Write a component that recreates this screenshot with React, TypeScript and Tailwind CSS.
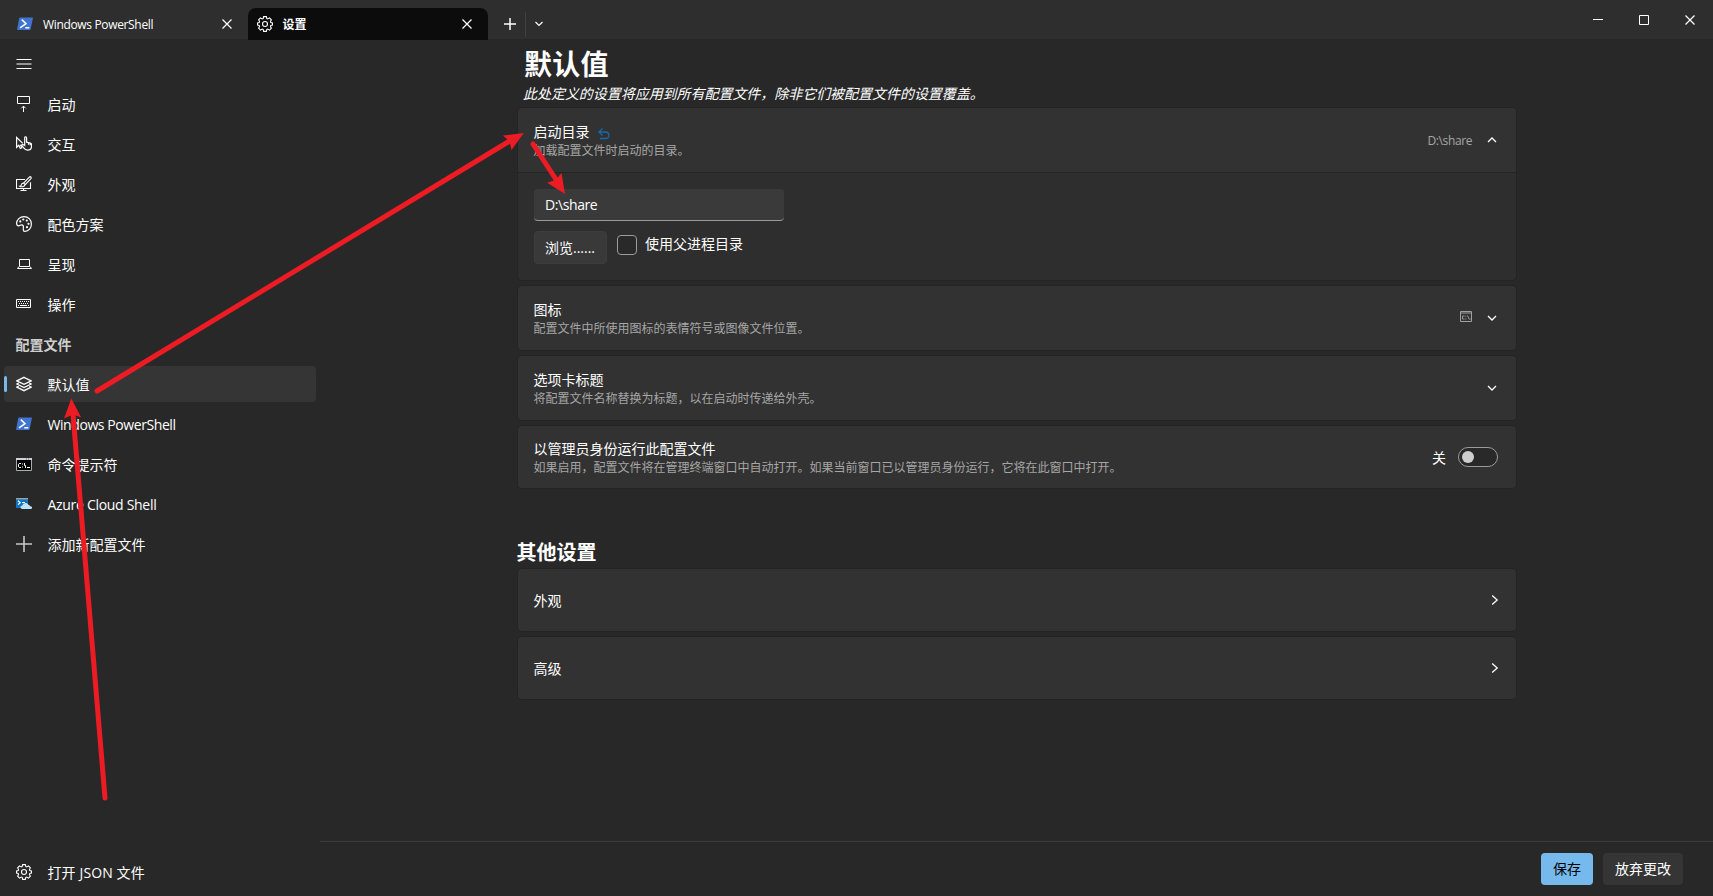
import React from "react";

const S = ({ children, w = 16, h = 16, className = "", sw = 1 }: any) => (
  <svg width={w} height={h} viewBox={`0 0 ${w} ${h}`} fill="none" stroke="currentColor" strokeWidth={sw} className={"shrink-0 " + className}>
    {children}
  </svg>
);

const Gear = () => (
  <S sw={1.1}>
    <path d="M6.6 0.6h2.8l.4 1.9 1 .4 1.700-1 1.900 1.900-1 1.700.4 1 1.700.4v2.200l-1.700.4-.4 1 1 1.700-1.900 1.900-1.700-1-1 .4-.4 1.900H6.600l-.4-1.900-1-.4-1.700 1-1.900-1.900 1-1.700-.4-1-1.700-.4V6.900l1.700-.4.4-1-1-1.700L3.500 1.900l1.700 1 1-.4z" />
    <circle cx="8" cy="8" r="2.500" />
  </S>
);

const PowerShell = () => (
  <S>
    <path d="M3 1.500h12.300c.5 0 .7.3.6.8l-2.300 10.900c-.1.500-.5.800-1 .8H.700c-.5 0-.7-.3-.6-.8L2.200 2.300c.1-.5.400-.8.800-.8z" fill="#3f74d1" stroke="none" />
    <path d="M4.800 3.600l4.200 4-6 4.200M8.300 11.800h4" stroke="#fff" strokeWidth="1.500" />
  </S>
);

const Launch = () => (
  <S>
    <path d="M1.500.5h12v7h-12zM7.500 16V10.200M5.300 12.300l2.200-2.200 2.200 2.200" />
  </S>
);

const Interact = () => (
  <S sw={1.2}>
    <path d="M6.800 7.400L.6 1.500v9.800l2.200-2.100 1.500 3.300 1.500-.7-1.400-3" />
    <path d="M8.700 9.400V1.700c0-1.300 1.900-1.300 1.900 0v4.500l3.700.8c.8.2 1.200.7 1.200 1.500v1.700c0 2.300-1.600 3.900-3.900 3.900-1.800 0-3-.9-3.900-2.200L5.400 9.200c.8-.9 1.900-.9 3.300.200zM12.500 6.800v2M14.200 7.200v2" />
  </S>
);

const Appearance = () => (
  <S sw={1.1}>
    <path d="M9 3.500H.5v9h14V6.200M7.500 12.500v2M4.500 14.500h6" />
    <path d="M14.900 1c-.6-.6-1.300-.2-1.800.3L7.600 7l1.600 1.600 5.500-5.800c.5-.5.700-1.200.2-1.800zM7.500 7.100c-1.500 0-2 .8-2.200 1.900-.1.700-.6 1.100-1.600 1.200 1 .7 4.800 1.200 5.400-1.500" />
  </S>
);

const Palette = () => (
  <S sw={1.2}>
    <path d="M8 .6C4 .6.600 3.700.600 7.300c0 1.500.9 2.500 2.100 2.500 1.300 0 1.800-.9 3-.9 1.400 0 1.900 1 1.700 2.300-.2 1.800-.5 4.200 1.600 4.200 3.700 0 6.400-3.400 6.400-7.400C15.400 3.700 12.100.6 8 .6z" />
    <g fill="currentColor" stroke="none">
      <circle cx="4.300" cy="5.400" r="1.100" /><circle cx="7.300" cy="3.500" r="1.100" /><circle cx="10.800" cy="4.600" r="1.100" />
      <circle cx="12.500" cy="7.800" r="1.100" /><circle cx="11" cy="11.200" r="1.100" />
    </g>
  </S>
);

const Laptop = () => (
  <S>
    <path d="M3.500 3.500h10v7h-10zM3 10.500l-1.500 2h14l-1.500-2" />
  </S>
);

const Keyboard = () => (
  <S>
    <path d="M.5 3.500h14v8H.5z" />
    <path d="M2 5.500h11M3 7.500h10" strokeDasharray="1 1" />
    <path d="M2 9.500h1M4 9.500h7M12 9.500h1" />
  </S>
);

const Layers = () => (
  <S sw={1.300}>
    <path d="M8 1.300l7.200 3.500L8 8.300.8 4.800zM2.700 7.100L.8 8 8 11.500 15.200 8l-1.900-.9M2.700 10.300l-1.900.9L8 14.700l7.200-3.500-1.900-.9" />
  </S>
);

const Cmd = () => (
  <S>
    <path d="M.5 2.500h15v12H.500z" fill="#000" stroke="#a9adb3" />
    <path d="M0 3h16" stroke="#cfd3d8" strokeWidth="2" />
    <path d="M10 3h4" stroke="#5f6a78" strokeDasharray="1 1" />
    <path d="M5 7.500H3.200l-.7.700v2.600l.7.700H5M6.500 7.500v1M6.500 10.500v1M8.500 7v2.500l1 0V12M11 11.500h3" stroke="#fff" />
  </S>
);

const Azure = () => (
  <S>
    <path d="M0 2h12v10H0z" fill="#0f74c4" stroke="none" />
    <path d="M0 2.700h12" stroke="#9aa4ad" strokeWidth="1.400" />
    <path d="M2 4.800l2.200 1.900L2 8.600M6 6.500h3" stroke="#fff" strokeWidth="1.200" />
    <path d="M6.500 13c-2.600 0-2.700-3.400-.1-3.500.5-3 5-3.300 5.800-.7 1.200 0 1.700.7 1.800 1.500 2.700-.2 2.700 2.700.8 2.700z" fill="#bfe3f7" stroke="none" />
  </S>
);

const Plus = () => (
  <S><path d="M8 0v16M0 8h16" stroke="#c8c8c8" strokeWidth="1.600" /></S>
);

const Chevron = ({ d }: { d: string }) => (
  <S w={10} h={10} sw={1.300}><path d={d} /></S>
);
const DOWN = "M1 3l4 4 4-4";
const UP = "M1 7l4-4 4 4";
const RIGHT = "M2.200.5l5 4.500-5 4.500";

const NavItem = ({ icon, label, text = "" }: any) => (
  <div className="flex h-9 items-center pl-3">
    {icon}
    <span className={"ml-[15.5px] pt-0.5 " + text}>{label}</span>
  </div>
);

const Titles = ({ title, desc, extra }: any) => (
  <div className="-ml-[0.5px] flex flex-col pt-0.5">
    <div className="flex h-5 items-center gap-[9px]">{title}{extra}</div>
    <div className="flex h-[18px] items-center text-xs text-[#a6a6a6]">{desc}</div>
  </div>
);

const card = "flex items-center justify-between rounded-[4px] bg-[#323232] pl-4 shadow-[0_0_0_1px_#242424]";

export default function App() {
  return (
    <div className="relative flex h-[896px] w-[1713px] flex-col overflow-hidden bg-[#282828] font-['Open_Sans','Noto_Sans_CJK_SC',sans-serif] text-sm leading-5 text-white">
      <header className="flex h-[39px] shrink-0 bg-[#2e2e2e]">
        <div className="flex h-10 w-[248px] items-center pt-2 pl-[17px] text-xs">
          <PowerShell />
          <span className="ml-2.5 flex-1 pt-0.5 tracking-[-0.34px]">Windows PowerShell</span>
          <S w={10} h={10} className="mr-4"><path d="M.5.5l9 9M9.500.5l-9 9" strokeWidth="1.200" /></S>
        </div>
        <div className="mt-2 flex h-8 w-60 items-center rounded-t-lg bg-[#0c0c0c] pl-[9px] text-xs font-bold">
          <Gear />
          <span className="ml-[9.5px] flex-1 pt-0.5">设置</span>
          <S w={10} h={10} className="mr-4"><path d="M.5.5l9 9M9.500.5l-9 9" strokeWidth="1.200" /></S>
        </div>
        <div className="mt-2 flex h-8 items-center pl-4">
          <S w={12} h={12} sw={1.500}><path d="M6 0v12M0 6h12" /></S>
          <div className="ml-[9px] h-[25px] w-px bg-[#404040]" />
          <S w={8} h={8} className="ml-[9px]" sw={1.200}><path d="M.5 2l3.500 3.500L7.500 2" /></S>
        </div>
        <div className="ml-auto flex gap-9 pt-[15px] pr-[18px]">
          <S w={10} h={10}><path d="M0 4.500h10" /></S>
          <S w={10} h={10}><path d="M.5.5h9v9h-9z" /></S>
          <S w={10} h={10}><path d="M.5.5l9 9M9.500.5l-9 9" strokeWidth="1.200" /></S>
        </div>
      </header>

      <div className="flex min-h-0 flex-1">
        <nav className="flex w-80 shrink-0 flex-col pt-[7px] pr-1 pb-[6px] pl-1">
          <div className="flex h-9 items-center pl-3">
            <S><path d="M.5 3.500h15M.5 8h15M.5 12.500h15" /></S>
          </div>
          <div className="mt-1 flex flex-col gap-1">
            <NavItem icon={<Launch />} label="启动" />
            <NavItem icon={<Interact />} label="交互" />
            <NavItem icon={<Appearance />} label="外观" />
            <NavItem icon={<Palette />} label="配色方案" />
            <NavItem icon={<Laptop />} label="呈现" />
            <NavItem icon={<Keyboard />} label="操作" />
            <div className="flex h-9 items-center pt-0.5 pl-[11.5px] font-bold text-[#cfcfcf]">配置文件</div>
            <div className="flex w-[312px] items-center rounded-[4px] bg-[#353535]">
              <div className="-mr-[3px] h-4 w-[3px] rounded-full bg-[#76b9ed]" />
              <NavItem icon={<Layers />} label="默认值" />
            </div>
            <NavItem icon={<PowerShell />} label="Windows PowerShell" text="tracking-[-0.42px]" />
            <NavItem icon={<Cmd />} label="命令提示符" />
            <NavItem icon={<Azure />} label="Azure Cloud Shell" text="tracking-[-0.3px]" />
            <NavItem icon={<Plus />} label="添加新配置文件" />
          </div>
          <div className="mt-auto">
            <NavItem icon={<Gear />} label="打开 JSON 文件" text="tracking-[0.12px]" />
          </div>
        </nav>

        <div className="flex min-w-0 flex-1 flex-col">
          <main className="flex w-[1196px] flex-1 flex-col pl-[198px]">
            <h1 className="mt-[5px] ml-1.5 flex h-10 items-center text-[28px] font-bold tracking-[0.2px]">默认值</h1>
            <p className="ml-[5px] flex h-5 items-center tracking-[-0.04px] italic">此处定义的设置将应用到所有配置文件，除非它们被配置文件的设置覆盖。</p>

            <section className="mt-1 rounded-[4px] bg-[#2e2e2e] shadow-[0_0_0_1px_#242424]">
              <div className="flex h-16 items-center justify-between rounded-t-[4px] bg-[#323232] pr-[19px] pl-4">
                <Titles
                  title="启动目录"
                  desc="加载配置文件时启动的目录。"
                  extra={<S w={12} h={12} sw={1.300} className="-ml-px mt-1 text-[#1769aa]"><path d="M4.500 .5L1 4l3.500 3.500M1 4h6.500c4.500 0 4.500 6.500 0 6.500H2" /></S>}
                />
                <div className="flex items-center gap-[15px] text-xs text-[#a6a6a6]">
                  <span className="pt-0.5 tracking-[-0.4px]">D:\share</span>
                  <span className="text-white"><Chevron d={UP} /></span>
                </div>
              </div>
              <div className="h-px bg-[#242424]" />
              <div className="flex h-[107px] flex-col pt-4 pl-4">
                <div className="flex h-8 w-[250px] items-center rounded-[4px] border-b border-[#9a9a9a] bg-[#3a3a3a] pt-px pl-[11px] tracking-[-0.42px]">D:\share</div>
                <div className="mt-2.5 flex">
                  <div className="flex h-[33px] w-[73px] items-center justify-center rounded-[4px] border border-[#3d3d3d] bg-[#393939] pt-px pr-px">浏览......</div>
                  <div className="mt-1 ml-2.5 h-5 w-5 rounded-[4px] border border-[#9b9b9b] bg-[#292929]" />
                  <span className="mt-[3px] ml-2">使用父进程目录</span>
                </div>
              </div>
            </section>

            <section className={card + " mt-1.5 h-16 pr-[19px]"}>
              <Titles title="图标" desc="配置文件中所使用图标的表情符号或图像文件位置。" />
              <div className="flex items-center gap-[15px]">
                <S w={12} h={12} className="-mt-0.5 text-[#a0a0a0]">
                  <path d="M.5 .500h11v10H.500zM0 2h12" />
                  <path d="M4.500 5h-2v3h2M5.800 4.700v1M5.800 7.500v1M7.500 4.500l1.800 4M9.500 8h1.200" strokeWidth=".9" />
                </S>
                <Chevron d={DOWN} />
              </div>
            </section>
            <section className={card + " mt-1.5 h-16 pr-[19px]"}>
              <Titles title="选项卡标题" desc="将配置文件名称替换为标题，以在启动时传递给外壳。" />
              <Chevron d={DOWN} />
            </section>
            <section className={card + " mt-1.5 h-[62px] pr-[18px]"}>
              <Titles title="以管理员身份运行此配置文件" desc="如果启用，配置文件将在管理终端窗口中自动打开。如果当前窗口已以管理员身份运行，它将在此窗口中打开。" />
              <div className="flex items-center gap-3">
                <span className="pt-0.5">关</span>
                <div className="flex h-5 w-10 items-center rounded-full border border-[#9b9b9b] bg-[#292929] pl-[3px]">
                  <div className="h-3 w-3 rounded-full bg-[#cecece]" />
                </div>
              </div>
            </section>

            <h2 className="mt-[51px] -ml-[1.5px] flex h-7 items-center text-xl font-bold">其他设置</h2>
            <section className={card + " mt-0.5 h-[62px] shrink-0 pr-4"}>
              <span className="-ml-[0.5px] pt-px">外观</span>
              <Chevron d={RIGHT} />
            </section>
            <section className={card + " mt-1.5 h-[62px] shrink-0 pr-4"}>
              <span className="-ml-[0.5px] pt-px">高级</span>
              <Chevron d={RIGHT} />
            </section>
          </main>
          <footer className="flex h-[55px] shrink-0 justify-end gap-2.5 border-t border-[#3b3b3b] pt-[11px] pr-[30px]">
            <button className="h-8 w-[52px] rounded-[4px] bg-[#76b9ed] text-black">保存</button>
            <button className="h-8 w-20 rounded-[4px] bg-[#353535]">放弃更改</button>
          </footer>
        </div>
      </div>

      <svg className="pointer-events-none absolute inset-0" width="1713" height="896" fill="#ed1c24" stroke="#ed1c24" strokeWidth="5" strokeLinecap="round">
        <path d="M105 798L73 414M97 391L508 142M533 144L557 181" />
        <g stroke="none">
          <path d="M71.300 398.500L81.200 417.500L73 414.500L64 418.500z" />
          <path d="M523.800 133L511.500 150L509.500 141.500L503 135.500z" />
          <path d="M565 194L547.200 182.800L555.500 180L561.500 173z" />
        </g>
      </svg>
    </div>
  );
}
